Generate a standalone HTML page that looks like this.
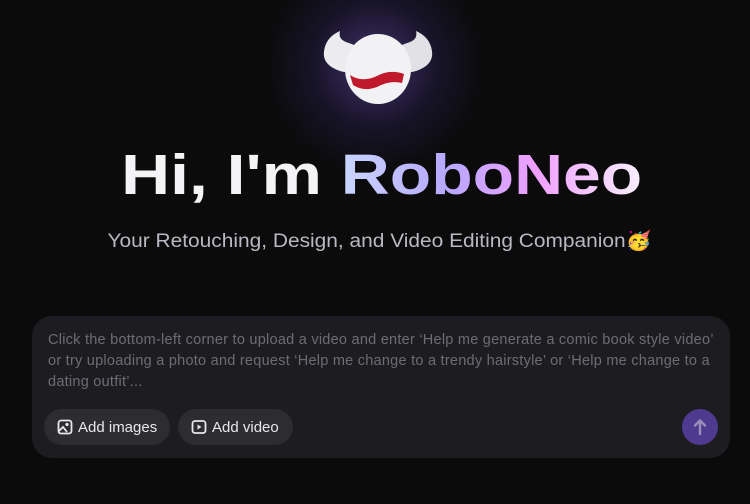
<!DOCTYPE html>
<html><head><style>
body{margin:0;width:750px;height:504px;background:#0b0b0c;overflow:hidden;font-family:"Liberation Sans",sans-serif;position:relative}
.glow{position:absolute;left:265px;top:-45px;width:220px;height:220px;border-radius:50%;background:radial-gradient(circle,rgba(120,90,210,.5) 0%,rgba(70,50,140,.22) 40%,rgba(0,0,0,0) 70%)}
h1{position:absolute;left:8px;width:750px;top:142px;margin:0;text-align:center;font-size:57px;font-weight:bold;color:#f4f4f6;transform:scaleX(1.19);transform-origin:382px 0;white-space:nowrap}
h1 span{background:linear-gradient(90deg,#c9d6ff 0%,#b7a8ff 35%,#f0a0ff 65%,#f8f0ff 100%);-webkit-background-clip:text;background-clip:text;color:transparent}
.sub{position:absolute;top:229px;left:5px;width:750px;text-align:center;font-size:19px;color:#b9b9c2;transform:scaleX(1.1);transform-origin:379px 0;white-space:nowrap}
.panel{position:absolute;left:32px;top:316px;width:698px;height:142px;border-radius:20px;background:#1d1d21}
.ph{position:absolute;left:16px;top:14px;width:670px;font-size:14.5px;line-height:21px;color:#6c6c74;letter-spacing:0.25px}
.btn{position:absolute;top:93px;height:36px;border-radius:18px;background:#2c2c31;color:#e8e8ec;font-size:15px;display:flex;align-items:center;padding:0 0 0 13px;box-sizing:border-box;white-space:nowrap}
.btn svg{margin-right:5px;flex:none}
.send{position:absolute;left:650px;top:93px;width:36px;height:36px;border-radius:50%;background:#4e3b90}
</style></head><body>
<div class="glow"></div>
<svg style="position:absolute;left:318px;top:25px" width="120" height="85" viewBox="0 0 120 85">
<path d="M22 6 Q20 14 28 17 Q40 21 48 26 Q40 52 22 46 Q4 40 6 26 Q8 12 22 6Z" fill="#ececef"/>
<path d="M98 6 Q100 14 92 17 Q80 21 72 26 Q80 52 98 46 Q116 40 114 26 Q112 12 98 6Z" fill="#e2e2e6"/>
<ellipse cx="60" cy="44" rx="33" ry="35" fill="#f2f2f4"/>
<path d="M32 50 Q44 58 59 51 Q72 44 86 49 L84 58 Q72 55 59 62 Q46 67 35 60Z" fill="#c0182c"/>
</svg>
<h1>Hi, I'm <span>RoboNeo</span></h1>
<div class="sub">Your Retouching, Design, and Video Editing Companion🥳</div>
<div class="panel">
<div class="ph">Click the bottom-left corner to upload a video and enter ‘Help me generate a comic book style video’ or try uploading a photo and request ‘Help me change to a trendy hairstyle’ or ‘Help me change to a dating outfit’...</div>
<div class="btn" style="left:12px;width:126px"><svg width="16" height="16" viewBox="0 0 16 16"><rect x="1.5" y="1.5" width="13" height="13" rx="2.5" fill="none" stroke="#e8e8ec" stroke-width="1.8"/><circle cx="10" cy="5.5" r="1.6" fill="#e8e8ec"/><path d="M2 12 L6 8 L10 13" fill="none" stroke="#e8e8ec" stroke-width="1.8"/></svg>Add images</div>
<div class="btn" style="left:146px;width:115px"><svg width="16" height="16" viewBox="0 0 16 16"><rect x="1.5" y="2" width="13" height="12" rx="2.5" fill="none" stroke="#e8e8ec" stroke-width="1.8"/><path d="M6.5 5.5 L10.5 8 L6.5 10.5Z" fill="#e8e8ec"/></svg>Add video</div>
<div class="send"><svg width="36" height="36" viewBox="0 0 36 36"><path d="M18 25 V12 M13 16.5 L18 11.5 L23 16.5" fill="none" stroke="#9a8fb8" stroke-width="2.4" stroke-linecap="round" stroke-linejoin="round"/></svg></div>
</div>
</body></html>
